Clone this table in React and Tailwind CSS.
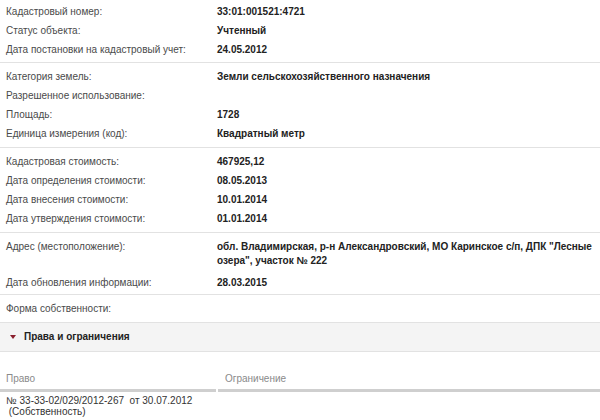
import React from "react";

const Row = ({ label, value }) => (
  <div className="grid grid-cols-[211px_1fr] h-[19px] items-center">
    <div className="text-[#4a4a4a]">{label}</div>
    <div className="font-bold text-[#222]">{value}</div>
  </div>
);

const Sep = () => <div className="h-px bg-[#e2e2e2]" />;

export default function App() {
  return (
    <div
      className="w-[600px] h-[420px] overflow-hidden bg-white text-[10px] leading-[14px]"
      style={{ fontFamily: '"Liberation Sans", Arial, sans-serif' }}
    >
      <div className="pl-[6px] pt-[2px] pb-[3px]">
        <Row label="Кадастровый номер:" value="33:01:001521:4721" />
        <Row label="Статус объекта:" value="Учтенный" />
        <Row label="Дата постановки на кадастровый учет:" value="24.05.2012" />
      </div>
      <Sep />
      <div className="pl-[6px] py-[4px]">
        <Row label="Категория земель:" value="Земли сельскохозяйственного назначения" />
        <Row label="Разрешенное использование:" value="" />
        <Row label="Площадь:" value="1728" />
        <Row label="Единица измерения (код):" value="Квадратный метр" />
      </div>
      <Sep />
      <div className="pl-[6px] py-[4px]">
        <Row label="Кадастровая стоимость:" value="467925,12" />
        <Row label="Дата определения стоимости:" value="08.05.2013" />
        <Row label="Дата внесения стоимости:" value="10.01.2014" />
        <Row label="Дата утверждения стоимости:" value="01.01.2014" />
      </div>
      <Sep />
      <div className="pl-[6px] pt-[4px] pb-[2px]">
        <div className="grid grid-cols-[211px_1fr] pt-[3px] pb-[5px]">
          <div className="text-[#4a4a4a]">Адрес (местоположение):</div>
          <div className="font-bold text-[#222] pr-[8px]">
            обл. Владимирская, р-н Александровский, МО Каринское с/п, ДПК "Лесные озера", участок № 222
          </div>
        </div>
        <Row label="Дата обновления информации:" value="28.03.2015" />
      </div>
      <Sep />
      <div className="pl-[6px] py-[4px]">
        <Row label="Форма собственности:" value="" />
      </div>
      <div className="h-[30px] bg-[#f4f4f4] border-y border-[#e2e2e2] flex items-center pl-[10px]">
        <svg width="6" height="4" viewBox="0 0 6 4" className="mr-[8px]">
          <polygon points="0,0 6,0 3,4" fill="#8a1f2d" />
        </svg>
        <span className="font-bold text-[#222]">Права и ограничения</span>
      </div>
      <div className="h-[16px]" />
      <div className="grid grid-cols-[216px_1fr] gap-x-[2px]">
        <div className="h-[24px] flex items-center pl-[6px] text-[#8a8a8a] border-b-[3px] border-[#cfcfcf]">
          Право
        </div>
        <div className="h-[24px] flex items-center pl-[7px] text-[#8a8a8a] border-b-[3px] border-[#cfcfcf]">
          Ограничение
        </div>
        <div className="pl-[6px] pt-[3px] text-[#333] leading-[11px]">
          <div>№ 33-33-02/029/2012-267&nbsp;&nbsp;от 30.07.2012</div>
          <div>&nbsp;(Собственность)</div>
        </div>
        <div />
      </div>
    </div>
  );
}
